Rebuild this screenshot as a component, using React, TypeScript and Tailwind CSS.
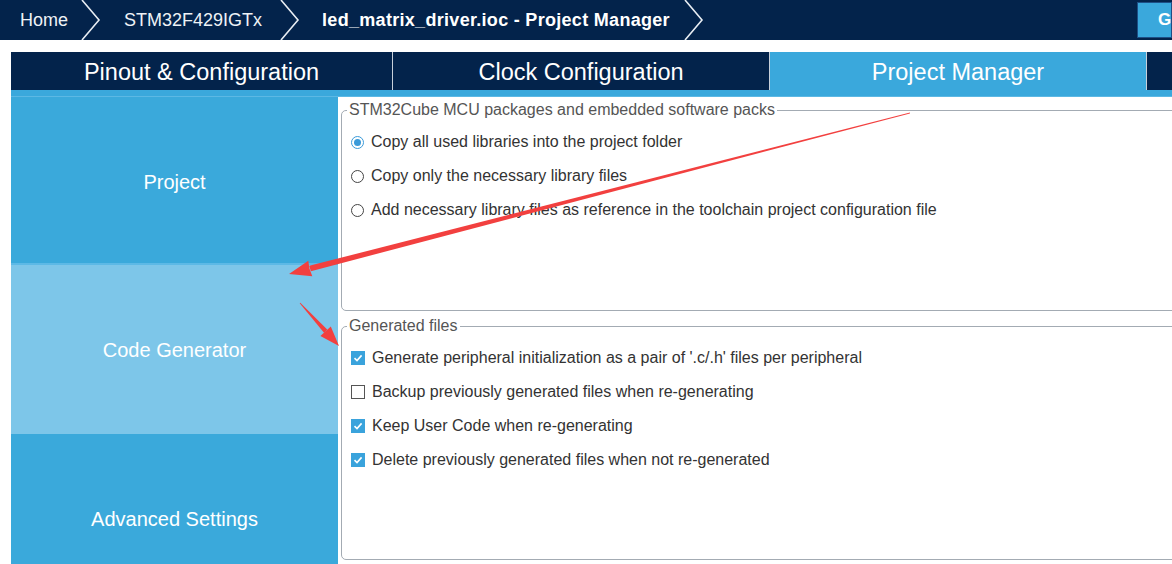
import React from "react";

const navy = "bg-[#03234b]";

function Chevron() {
  return (
    <svg width="22" height="40" viewBox="0 0 22 40" className="shrink-0">
      <polyline points="2,0 19,20 2,40" fill="none" stroke="#e8edf3" strokeWidth="1.6" />
    </svg>
  );
}

function Radio({ on }: { on?: boolean }) {
  return (
    <span
      className={`flex h-[13px] w-[13px] shrink-0 items-center justify-center rounded-full border bg-white ${
        on ? "border-[#3a9ad9]" : "border-[#444]"
      }`}
    >
      {on && <span className="h-[7px] w-[7px] rounded-full bg-[#3a9ad9]" />}
    </span>
  );
}

function Check({ on }: { on?: boolean }) {
  if (!on) return <span className="h-[14px] w-[14px] shrink-0 border border-[#555] bg-white" />;
  return (
    <span className="flex h-[14px] w-[14px] shrink-0 items-center justify-center bg-[#3aa3dc]">
      <svg width="10" height="10" viewBox="0 0 10 10">
        <polyline points="1.5,5.2 4,7.6 8.6,2.4" fill="none" stroke="white" strokeWidth="1.6" />
      </svg>
    </span>
  );
}

function Row({ children, mark }: { children: React.ReactNode; mark: React.ReactNode }) {
  return (
    <div className="flex h-[34px] items-center gap-[7px] pl-[9px] text-[16px] text-[#333]">
      {mark}
      <span>{children}</span>
    </div>
  );
}

export default function App() {
  const radios = [
    "Copy all used libraries into the project folder",
    "Copy only the necessary library files",
    "Add necessary library files as reference in the toolchain project configuration file",
  ];
  const checks = [
    { t: "Generate peripheral initialization as a pair of '.c/.h' files per peripheral", on: true },
    { t: "Backup previously generated files when re-generating", on: false },
    { t: "Keep User Code when re-generating", on: true },
    { t: "Delete previously generated files when not re-generated", on: true },
  ];

  return (
    <div
      className="relative h-[564px] w-[1172px] overflow-hidden bg-white"
      style={{ fontFamily: '"Liberation Sans", Arial, sans-serif' }}
    >
      {/* breadcrumb bar */}
      <div className={`flex h-[40px] items-center ${navy} text-[18px] text-white`}>
        <span className="ml-[20px] text-[#eef2f6]">Home</span>
        <span className="ml-[12px]">
          <Chevron />
        </span>
        <span className="ml-[22px] text-[#eef2f6]">STM32F429IGTx</span>
        <span className="ml-[17px]">
          <Chevron />
        </span>
        <span className="ml-[21px] text-[18px] font-bold tracking-[0.3px]">
          led_matrix_driver.ioc - Project Manager
        </span>
        <span className="ml-[13px]">
          <Chevron />
        </span>
        <div className="ml-auto flex h-[36px] w-[35px] items-center border border-[#1d4f86] bg-[#3aa8dc] pl-[20px] text-[17px] font-bold">
          G
        </div>
      </div>

      {/* tabs */}
      <div className="ml-[11px] mt-[12px] flex h-[38px] text-[23.5px] text-white">
        <div className={`flex w-[382px] items-center justify-center border-r border-[#c8d0da] pt-[3px] ${navy}`}>
          Pinout &amp; Configuration
        </div>
        <div className={`flex w-[377px] items-center justify-center border-r border-[#c8d0da] pt-[3px] ${navy}`}>
          Clock Configuration
        </div>
        <div className="flex w-[377px] items-center justify-center border-r border-[#c8d0da] bg-[#3aa8dc] pt-[3px]">
          Project Manager
        </div>
        <div className={`flex-1 ${navy}`} />
      </div>
      <div className="ml-[11px] h-[7px] border-b border-[#5cb8e4] bg-[#3aa8dc]" />

      {/* body */}
      <div className="ml-[11px] flex h-[467px]">
        <div className="flex w-[327px] flex-col text-[20px] text-white">
          <div className="flex h-[166px] shrink-0 items-center justify-center bg-[#3aa9db] pt-[4px]">Project</div>
          <div className="h-[2px] shrink-0 bg-[#5cb9e6]" />
          <div className="flex h-[169px] shrink-0 items-center justify-center bg-[#7dc6e9]">Code Generator</div>
          <div className="flex h-[170px] shrink-0 items-center justify-center bg-[#3aa9db]">Advanced Settings</div>
        </div>

        <div className="flex-1 overflow-hidden bg-white pl-[3px] pt-[4px]">
          <fieldset className="m-0 h-[210px] w-[860px] rounded-[5px] border border-[#a3abb3] p-0">
            <legend className="ml-[5px] px-[2px] text-[16px] leading-[18px] text-[#555]">
              STM32Cube MCU packages and embedded software packs
            </legend>
            <div className="pt-[6px]">
              {radios.map((r, i) => (
                <Row key={r} mark={<Radio on={i === 0} />}>
                  {r}
                </Row>
              ))}
            </div>
          </fieldset>

          <fieldset className="m-0 mt-[6px] h-[243px] w-[860px] rounded-[5px] border border-[#a3abb3] p-0">
            <legend className="ml-[5px] px-[2px] text-[16px] leading-[18px] text-[#555]">Generated files</legend>
            <div className="pt-[6px]">
              {checks.map((c) => (
                <Row key={c.t} mark={<Check on={c.on} />}>
                  {c.t}
                </Row>
              ))}
            </div>
          </fieldset>
        </div>
      </div>

      {/* annotation arrows */}
      <svg className="pointer-events-none absolute left-0 top-0" width="1172" height="564">
        <polygon points="910,112.6 909.9,113.4 310.9,271.2 309.2,265.8" fill="#f2403f" />
        <polygon points="289,274 312.3,276.3 309.4,268.4 308.3,260.7" fill="#f2403f" />
        <polygon points="300.3,302.7 299.7,303.3 324.2,333 327.2,329.6" fill="#f2403f" />
        <polygon points="339,346 320.4,335.9 325.6,331.2 330.8,326.5" fill="#f2403f" />
      </svg>
    </div>
  );
}
